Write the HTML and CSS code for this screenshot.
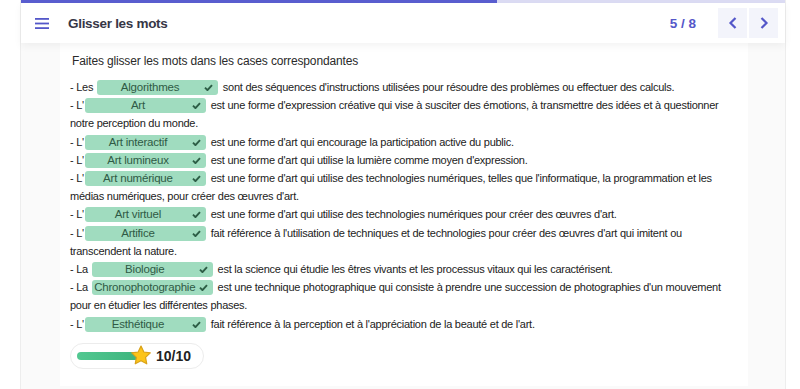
FILE: index.html
```html
<!DOCTYPE html>
<html lang="fr">
<head>
    <meta charset="UTF-8">
    <title>Glisser les mots</title>
    <link rel="stylesheet" href="styles.css">
</head>
<body>
    <div class="app">
        <div class="progress"><div class="progress-fill"></div></div>
        <div class="header">
            <svg class="menu" width="14" height="11" viewBox="0 0 14 11">
                <rect x="0" y="0" width="14" height="1.8" fill="#5457c9"/>
                <rect x="0" y="4.6" width="14" height="1.8" fill="#5457c9"/>
                <rect x="0" y="9.2" width="14" height="1.8" fill="#5457c9"/>
            </svg>
            <div class="title">Glisser les mots</div>
            <div class="count">5 / 8</div>
            <div class="nav">
                <button class="nav-btn">
                    <svg width="12" height="14" viewBox="0 0 12 14"><path d="M8.5 2 L3.5 7 L8.5 12" fill="none" stroke="#5457c9" stroke-width="2.2"/></svg>
                </button>
                <button class="nav-btn">
                    <svg width="12" height="14" viewBox="0 0 12 14"><path d="M3.5 2 L8.5 7 L3.5 12" fill="none" stroke="#5457c9" stroke-width="2.2"/></svg>
                </button>
            </div>
        </div>
        <div class="card">
            <div class="instruction">Faites glisser les mots dans les cases correspondantes</div>
            <div class="lines">
                <div class="line">- Les <span class="drop">Algorithmes<svg class="check" viewBox="0 0 10 8"><path d="M1 4.2 L3.8 7 L9 1.2" fill="none" stroke="#2d5e46" stroke-width="2.2"/></svg></span> sont des séquences d'instructions utilisées pour résoudre des problèmes ou effectuer des calculs.</div>
                <div class="line">- L'<span class="drop">Art<svg class="check" viewBox="0 0 10 8"><path d="M1 4.2 L3.8 7 L9 1.2" fill="none" stroke="#2d5e46" stroke-width="2.2"/></svg></span> est une forme d'expression créative qui vise à susciter des émotions, à transmettre des idées et à questionner notre perception du monde.</div>
                <div class="line">- L'<span class="drop">Art interactif<svg class="check" viewBox="0 0 10 8"><path d="M1 4.2 L3.8 7 L9 1.2" fill="none" stroke="#2d5e46" stroke-width="2.2"/></svg></span> est une forme d'art qui encourage la participation active du public.</div>
                <div class="line">- L'<span class="drop">Art lumineux<svg class="check" viewBox="0 0 10 8"><path d="M1 4.2 L3.8 7 L9 1.2" fill="none" stroke="#2d5e46" stroke-width="2.2"/></svg></span> est une forme d'art qui utilise la lumière comme moyen d'expression.</div>
                <div class="line">- L'<span class="drop">Art numérique<svg class="check" viewBox="0 0 10 8"><path d="M1 4.2 L3.8 7 L9 1.2" fill="none" stroke="#2d5e46" stroke-width="2.2"/></svg></span> est une forme d'art qui utilise des technologies numériques, telles que l'informatique, la programmation et les médias numériques, pour créer des œuvres d'art.</div>
                <div class="line">- L'<span class="drop">Art virtuel<svg class="check" viewBox="0 0 10 8"><path d="M1 4.2 L3.8 7 L9 1.2" fill="none" stroke="#2d5e46" stroke-width="2.2"/></svg></span> est une forme d'art qui utilise des technologies numériques pour créer des œuvres d'art.</div>
                <div class="line">- L'<span class="drop">Artifice<svg class="check" viewBox="0 0 10 8"><path d="M1 4.2 L3.8 7 L9 1.2" fill="none" stroke="#2d5e46" stroke-width="2.2"/></svg></span> fait référence à l'utilisation de techniques et de technologies pour créer des œuvres d'art qui imitent ou transcendent la nature.</div>
                <div class="line">- La <span class="drop">Biologie<svg class="check" viewBox="0 0 10 8"><path d="M1 4.2 L3.8 7 L9 1.2" fill="none" stroke="#2d5e46" stroke-width="2.2"/></svg></span> est la science qui étudie les êtres vivants et les processus vitaux qui les caractérisent.</div>
                <div class="line">- La <span class="drop">Chronophotographie<svg class="check" viewBox="0 0 10 8"><path d="M1 4.2 L3.8 7 L9 1.2" fill="none" stroke="#2d5e46" stroke-width="2.2"/></svg></span> est une technique photographique qui consiste à prendre une succession de photographies d'un mouvement pour en étudier les différentes phases.</div>
                <div class="line">- L'<span class="drop">Esthétique<svg class="check" viewBox="0 0 10 8"><path d="M1 4.2 L3.8 7 L9 1.2" fill="none" stroke="#2d5e46" stroke-width="2.2"/></svg></span> fait référence à la perception et à l'appréciation de la beauté et de l'art.</div>
            </div>
            <div class="score">
                <div class="bar"><div class="bar-fill"></div></div>
                <svg class="star" width="22" height="21" viewBox="0 0 24 23">
                    <path d="M12 1.2 L15.1 7.7 L22.2 8.6 L17 13.5 L18.3 20.6 L12 17.2 L5.7 20.6 L7 13.5 L1.8 8.6 L8.9 7.7 Z" fill="#fcc419" stroke="#d9a21a" stroke-width="1.3" stroke-linejoin="round"/>
                </svg>
                <span class="points">10/10</span>
            </div>
        </div>
    </div>
</body>
</html>
```

FILE: styles.css
```css
body {
    margin: 0;
    font-family: "Liberation Sans", Arial, sans-serif;
    background-color: #ffffff;
    color: #222;
}
.app {
    margin-left: 20px;
    width: 764px;
    height: 389px;
    background-color: #fafafa;
    border-left: 1px solid #ededed;
    border-right: 1px solid #ededed;
}
.progress {
    height: 3px;
    background-color: #dcdcf4;
}
.progress-fill {
    width: 476px;
    height: 100%;
    background-color: #5a5ed0;
}
.header {
    height: 40px;
    display: flex;
    align-items: center;
    background-color: white;
    box-shadow: 0 3px 8px rgba(0, 0, 0, 0.05);
    position: relative;
    padding-left: 14px;
}
.menu {
    margin-right: 19px;
}
.title {
    font-size: 13.5px;
    letter-spacing: -0.3px;
    font-weight: bold;
    color: #363646;
    flex: 1;
}
.count {
    font-size: 13.5px;
    font-weight: bold;
    color: #5457c9;
    margin-right: 22px;
}
.nav {
    display: flex;
    gap: 2px;
    margin-right: 7px;
}
.nav-btn {
    width: 29px;
    height: 30px;
    border: none;
    background-color: #f3f4fb;
    display: flex;
    align-items: center;
    justify-content: center;
    padding: 0;
}
.card {
    margin: 0 37px 0 39px;
    height: 334px;
    background-color: white;
    padding: 9px 10px 0 10px;
}
.instruction {
    font-size: 12px;
    letter-spacing: -0.15px;
    color: #2a2a2a;
    padding-left: 2px;
    line-height: 18px;
    margin-bottom: 8px;
}
.line {
    font-size: 11px;
    letter-spacing: -0.25px;
    line-height: 18.2px;
}
.drop {
    display: inline-block;
    box-sizing: border-box;
    min-width: 121px;
    height: 15px;
    line-height: 15px;
    margin: 0 2px 0 1px;
    padding: 0 17px 0 2px;
    background-color: #a0dcbf;
    border-radius: 3px;
    text-align: center;
    color: #2f5a45;
    font-size: 11.5px;
    letter-spacing: -0.2px;
    position: relative;
}
.check {
    position: absolute;
    right: 5px;
    top: 4px;
    width: 9px;
    height: 7px;
}
.score {
    display: inline-flex;
    align-items: center;
    margin-top: 10px;
    height: 24px;
    padding: 0 12px 0 6px;
    border: 1px solid #ececec;
    border-radius: 13px;
}
.bar {
    width: 62px;
    height: 8px;
    border-radius: 4px;
    background-color: #e8e8e8;
    overflow: hidden;
}
.bar-fill {
    width: 100%;
    height: 100%;
    background: linear-gradient(90deg, #52c891, #3db47d);
}
.star {
    margin-left: -9px;
    margin-right: 4px;
}
.points {
    font-size: 14px;
    font-weight: bold;
    color: #222;
}
```
